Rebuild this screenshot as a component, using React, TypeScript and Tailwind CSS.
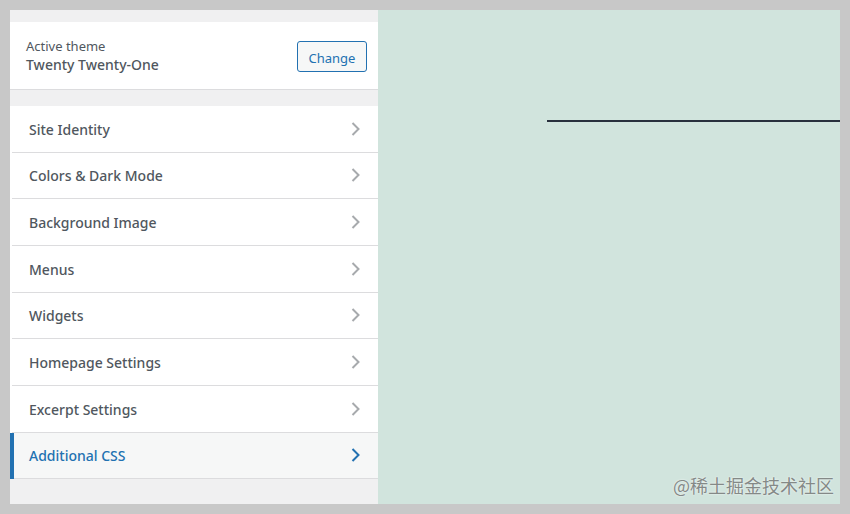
import React from "react";

const items = [
  "Site Identity",
  "Colors & Dark Mode",
  "Background Image",
  "Menus",
  "Widgets",
  "Homepage Settings",
  "Excerpt Settings",
];

function Chevron({ active }: { active?: boolean }) {
  return (
    <svg width="10" height="16" viewBox="0 0 10 16" className="shrink-0">
      <path
        d="M1.5 2 L7.5 8 L1.5 14"
        fill="none"
        stroke={active ? "#2271b1" : "#a7aaad"}
        strokeWidth="2"
      />
    </svg>
  );
}

export default function App() {
  return (
    <div
      className="w-[850px] h-[514px] bg-[#c8c8c8] p-[10px] pb-[10px] flex"
      style={{ fontFamily: '"Noto Sans", "Open Sans", sans-serif' }}
    >
      <div className="flex w-[830px] h-[494px] bg-[#f0f0f1]">
        <div className="w-[368px] flex flex-col bg-[#f0f0f1] pt-[12px]">
          <div className="h-[68px] bg-white border-b border-[#dcdcde] flex items-center justify-between pl-[16px] pr-[11px]">
            <div className="flex flex-col">
              <span className="text-[13px] leading-[18px] text-[#50575e]">Active theme</span>
              <span className="text-[14px] leading-[20px] font-medium text-[#50575e]">
                Twenty Twenty-One
              </span>
            </div>
            <button className="w-[70px] h-[31px] rounded-[3px] border border-[#2271b1] bg-[#f6f7f7] text-[#2271b1] text-[13px] leading-[18px] pt-[3px] mt-[2px]">
              Change
            </button>
          </div>
          <div className="h-[16px]" />
          <ul className="flex flex-col">
            {items.map((t) => (
              <li key={t} className="bg-white">
                <div className="ml-[2px] h-[46.67px] border-b border-[#dcdcde] flex items-center justify-between pl-[17px] pr-[17px]">
                  <span className="text-[14px] font-medium text-[#50575e] pt-[1px]">{t}</span>
                  <Chevron />
                </div>
              </li>
            ))}
            <li className="bg-[#f6f7f7] border-l-[4px] border-[#2271b1]">
              <div className="h-[46.67px] border-b border-[#dcdcde] flex items-center justify-between pl-[15px] pr-[17px]">
                <span className="text-[14px] font-medium text-[#2271b1] pt-[1px]">Additional CSS</span>
                <Chevron active />
              </div>
            </li>
          </ul>
        </div>
        <div className="relative flex-1 bg-[#d1e4dd]">
          <div className="absolute left-[169px] right-0 top-[110px] h-[1.5px] bg-[#28303d]" />
          <div
            className="absolute right-[6px] bottom-[5px] text-[18px] text-[#848987]"
            style={{
              fontFamily: '"Noto Sans CJK SC", sans-serif',
              textShadow: "0 0 2px #fff",
            }}
          >
            @稀土掘金技术社区
          </div>
        </div>
      </div>
    </div>
  );
}
